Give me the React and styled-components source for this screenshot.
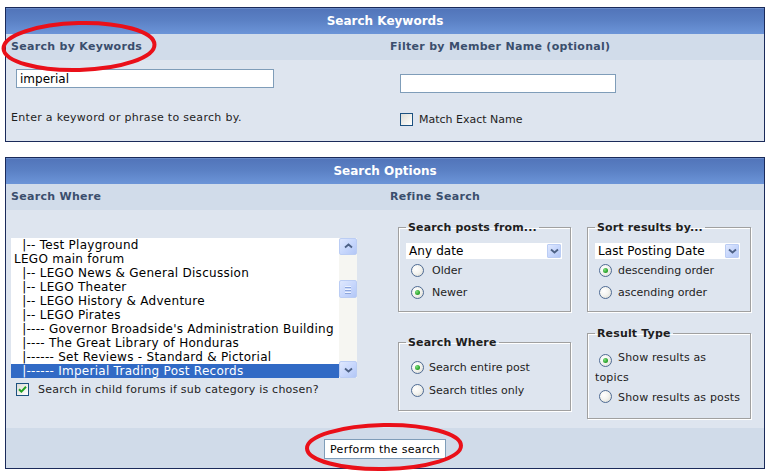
import React from "react";
import styled, { createGlobalStyle } from "styled-components";

const GlobalStyle = createGlobalStyle`
  html, body { margin: 0; padding: 0; background: #ffffff; }
  body { font-family: "DejaVu Sans", Verdana, sans-serif; font-size: 11px; color: #1e1e1e; }
  * { box-sizing: border-box; }
`;

const Page = styled.div`
  position: relative;
  width: 769px;
  height: 476px;
  padding: 7px 4px 0 5px;
  overflow: hidden;
`;

const Panel = styled.section`
  border: 1px solid #1a2a5a;
  background: #dee5ef;
  margin-bottom: ${(p) => p.$gap || 0}px;
`;

const Header = styled.div`
  height: 26px;
  line-height: 26px;
  text-align: center;
  color: #ffffff;
  font-weight: bold;
  font-size: 12px;
  background: linear-gradient(#7f9fd6 0px, #5275ba 1px, #5a80c4 12px, #6c95d8 26px);
`;

const Columns = styled.div`
  display: grid;
  grid-template-columns: 379px 379px;
  height: ${(p) => p.$h}px;
  background: ${(p) => p.$bg || "transparent"};
`;

const SubTitle = styled.div`
  padding-left: 5px;
  line-height: 26px;
  font-weight: bold;
  letter-spacing: 0.3px;
  color: #3a4e6d;
`;

const Cell = styled.div`
  display: flex;
  flex-direction: column;
  padding: ${(p) => p.$pad || "0 0 0 5px"};
`;

const TextInput = styled.input`
  width: ${(p) => p.$w}px;
  height: 19px;
  margin: ${(p) => p.$m || 0};
  border: 1px solid #7f9db9;
  background: #ffffff;
  padding: 0 3px;
  font-family: "DejaVu Sans", Verdana, sans-serif;
  font-size: 12px;
  color: #000;
  outline: none;
`;

const Hint = styled.div`
  margin-top: ${(p) => p.$mt || 0}px;
  line-height: 13px;
  letter-spacing: 0.3px;
  color: #1e1e1e;
`;

const CheckRow = styled.label`
  display: flex;
  align-items: center;
  gap: ${(p) => p.$gap || 6}px;
  margin: ${(p) => p.$m || 0};
  height: 13px;
  letter-spacing: ${(p) => p.$ls || 0}px;
  color: #1e1e1e;
`;

const CheckBox = styled.span`
  width: 13px;
  height: 13px;
  flex: none;
  border: 1px solid #1c5180;
  background: linear-gradient(135deg, #dcdcd7 0%, #f2f2ee 60%, #ffffff 100%);
  display: flex;
  align-items: center;
  justify-content: center;
`;

const Check = ({ checked }) => (
  <CheckBox>
    {checked && (
      <svg width="9" height="9" viewBox="0 0 9 9">
        <path d="M1 4.2 L3.4 6.6 L8 1.8" fill="none" stroke="#21a121" strokeWidth="2" />
      </svg>
    )}
  </CheckBox>
);

/* ---------- list box ---------- */
const ListBox = styled.div`
  display: flex;
  width: 346px;
  height: 140px;
  background: #ffffff;
  margin-bottom: 5px;
`;

const Options = styled.div`
  flex: 1;
  overflow: hidden;
  font-family: "DejaVu Sans", Verdana, sans-serif;
  font-size: 12px;
  letter-spacing: 0.27px;
`;

const Option = styled.div`
  height: 14px;
  line-height: 14px;
  padding-left: 3px;
  white-space: pre;
  color: ${(p) => (p.$sel ? "#ffffff" : "#000000")};
  background: ${(p) => (p.$sel ? "#316ac5" : "transparent")};
`;

const ScrollBar = styled.div`
  width: 18px;
  flex: none;
  display: flex;
  flex-direction: column;
  background: #f6f6f2;
`;

const ScrollBtn = styled.div`
  height: 17px;
  margin-top: ${(p) => p.$mt || 0}px;
  border: 1px solid #bbcdf4;
  border-radius: 2px;
  background: linear-gradient(135deg, #dfe8fe 0%, #c6d6fc 55%, #b3c7f6 100%);
  display: flex;
  align-items: center;
  justify-content: center;
`;

const Thumb = styled(ScrollBtn)`
  height: 19px;
  margin-top: 25px;
  flex-direction: column;
  gap: 2px;
`;

const Grip = styled.span`
  width: 6px;
  height: 1px;
  background: #eef3fe;
  box-shadow: 0 1px 0 #8da6dc;
`;

const Chevron = ({ down }) => (
  <svg width="9" height="6" viewBox="0 0 9 6">
    <path
      d={down ? "M1 1.5 L4.5 4.5 L8 1.5" : "M1 4.5 L4.5 1.5 L8 4.5"}
      fill="none"
      stroke="#4d6185"
      strokeWidth="1.8"
    />
  </svg>
);

/* ---------- fieldsets ---------- */
const OptionsGrid = styled.div`
  display: grid;
  grid-template-columns: 173px 164px;
  grid-template-rows: 93px 110px;
  column-gap: 16px;
  row-gap: 5px;
  align-items: center;
  padding: 10px 0 0 13px;
`;

const Box = styled.fieldset`
  margin: 0;
  padding: 0 ${(p) => p.$pr || 5}px ${(p) => p.$pb || 8}px 7px;
  border: 1px solid #a0a0a0;
  box-shadow: inset 1px 1px 0 #ffffff, 1px 1px 0 #ffffff;
  min-width: 0;
`;

const Legend = styled.legend`
  padding: 0 2px;
  font-weight: bold;
  line-height: 13px;
  letter-spacing: 0.15px;
  color: #1e1e1e;
`;

const Select = styled.div`
  position: relative;
  height: 16px;
  width: ${(p) => p.$w}px;
  margin-top: 9px;
  background: #ffffff;
  font-family: "DejaVu Sans", Verdana, sans-serif;
  font-size: 12px;
  letter-spacing: 0.1px;
  line-height: 16px;
  padding-left: 3px;
  color: #000;
`;

const SelectBtn = styled.span`
  position: absolute;
  right: 1px;
  top: 1px;
  width: 14px;
  height: 14px;
  border: 1px solid #bbcdf4;
  border-radius: 1px;
  background: linear-gradient(135deg, #dfe8fe 0%, #c6d6fc 55%, #b3c7f6 100%);
  display: flex;
  align-items: center;
  justify-content: center;
`;

const RadioRow = styled.div`
  display: flex;
  align-items: center;
  height: ${(p) => p.$h || 22}px;
  margin-top: ${(p) => p.$mt || 0}px;
  padding-left: ${(p) => p.$pl || 5}px;
  gap: ${(p) => p.$gap || 8}px;
  color: #1e1e1e;
`;

const RadioCircle = styled.span`
  display: inline-flex;
  align-items: center;
  justify-content: center;
  width: 13px;
  height: 13px;
  flex: none;
  border-radius: 50%;
  border: 1px solid #4f6b93;
  background: radial-gradient(circle at 35% 35%, #ffffff 0%, #f4f4f0 45%, #d6d6cf 100%);
  vertical-align: -2px;
  margin: ${(p) => p.$m || 0};
`;

const Dot = styled.span`
  width: 5px;
  height: 5px;
  border-radius: 50%;
  background: radial-gradient(circle at 35% 35%, #7fe07f 0%, #2fa52f 60%, #1b861b 100%);
`;

const Radio = ({ checked, m }) => <RadioCircle $m={m}>{checked && <Dot />}</RadioCircle>;

const Flow = styled.div`
  line-height: 20px;
  margin-top: ${(p) => p.$mt || 0}px;
  letter-spacing: 0.15px;
  color: #1e1e1e;
`;

const Footer = styled.div`
  height: 40px;
  background: #d0dbe9;
  display: flex;
  justify-content: center;
  align-items: center;
  padding-top: 2px;
`;

const Button = styled.button`
  width: 122px;
  height: 20px;
  border: 1px solid #7f9db9;
  background: #ffffff;
  font-family: "DejaVu Sans", Verdana, sans-serif;
  font-size: 11px;
  letter-spacing: 0.28px;
  color: #000;
  padding: 0;
`;

const Marks = styled.svg`
  position: absolute;
  left: 0;
  top: 0;
  pointer-events: none;
`;

const forums = [
  "\u00a0\u00a0|-- Test Playground",
  "LEGO main forum",
  "\u00a0\u00a0|-- LEGO News & General Discussion",
  "\u00a0\u00a0|-- LEGO Theater",
  "\u00a0\u00a0|-- LEGO History & Adventure",
  "\u00a0\u00a0|-- LEGO Pirates",
  "\u00a0\u00a0|---- Governor Broadside's Administration Building",
  "\u00a0\u00a0|---- The Great Library of Honduras",
  "\u00a0\u00a0|------ Set Reviews - Standard & Pictorial",
  "\u00a0\u00a0|------ Imperial Trading Post Records",
];

export default function App() {
  return (
    <>
      <GlobalStyle />
      <Page>
        <Panel $gap={15}>
          <Header>Search Keywords</Header>
          <Columns $h={26} $bg="#d1dcea">
            <SubTitle>Search by Keywords</SubTitle>
            <SubTitle>Filter by Member Name (optional)</SubTitle>
          </Columns>
          <Columns $h={81}>
            <Cell $pad="9px 0 0 5px">
              <TextInput $w={258} $m="0 0 0 5px" defaultValue="imperial" />
              <Hint $mt={23}>Enter a keyword or phrase to search by.</Hint>
            </Cell>
            <Cell $pad="14px 0 0 15px">
              <TextInput $w={216} />
              <CheckRow $m="20px 0 0 0">
                <Check />
                Match Exact Name
              </CheckRow>
            </Cell>
          </Columns>
        </Panel>

        <Panel>
          <Header>Search Options</Header>
          <Columns $h={26} $bg="#d1dcea">
            <SubTitle>Search Where</SubTitle>
            <SubTitle>Refine Search</SubTitle>
          </Columns>
          <Columns $h={218}>
            <Cell $pad="28px 0 0 5px">
              <ListBox>
                <Options>
                  {forums.map((f, i) => (
                    <Option key={i} $sel={i === forums.length - 1}>
                      {f}
                    </Option>
                  ))}
                </Options>
                <ScrollBar>
                  <ScrollBtn>
                    <Chevron />
                  </ScrollBtn>
                  <Thumb>
                    <Grip />
                    <Grip />
                    <Grip />
                  </Thumb>
                  <ScrollBtn $mt={63}>
                    <Chevron down />
                  </ScrollBtn>
                </ScrollBar>
              </ListBox>
              <CheckRow $m="0 0 0 5px" $gap={9} $ls={0.23}>
                <Check checked />
                Search in child forums if sub category is chosen?
              </CheckRow>
            </Cell>
            <Cell $pad="0">
              <OptionsGrid>
                <Box $pb={8}>
                  <Legend>Search posts from...</Legend>
                  <Select $w={156}>
                    Any date
                    <SelectBtn>
                      <Chevron down />
                    </SelectBtn>
                  </Select>
                  <RadioRow>
                    <Radio />
                    Older
                  </RadioRow>
                  <RadioRow>
                    <Radio checked />
                    Newer
                  </RadioRow>
                </Box>
                <Box $pb={8}>
                  <Legend>Sort results by...</Legend>
                  <Select $w={145}>
                    Last Posting Date
                    <SelectBtn>
                      <Chevron down />
                    </SelectBtn>
                  </Select>
                  <RadioRow $pl={4} $gap={6}>
                    <Radio checked />
                    descending order
                  </RadioRow>
                  <RadioRow $pl={4} $gap={6}>
                    <Radio />
                    ascending order
                  </RadioRow>
                </Box>
                <Box $pb={8}>
                  <Legend>Search Where</Legend>
                  <RadioRow $h={23} $pl={5} $gap={5} $mt={7}>
                    <Radio checked />
                    Search entire post
                  </RadioRow>
                  <RadioRow $h={23} $pl={5} $gap={5}>
                    <Radio />
                    Search titles only
                  </RadioRow>
                </Box>
                <Box $pb={10} $pr={8}>
                  <Legend>Result Type</Legend>
                  <Flow $mt={8}>
                    <Radio checked m="0 6px 0 4px" />
                    Show results as topics
                  </Flow>
                  <Flow>
                    <Radio m="0 6px 0 4px" />
                    Show results as posts
                  </Flow>
                </Box>
              </OptionsGrid>
            </Cell>
          </Columns>
          <Footer>
            <Button type="button">Perform the search</Button>
          </Footer>
        </Panel>

        <Marks width="769" height="476" viewBox="0 0 769 476">
          <ellipse cx="79" cy="46.5" rx="75.5" ry="23.5" fill="none" stroke="#ea1019" strokeWidth="4" transform="rotate(-1.5 79 46.5)" />
          <ellipse cx="384" cy="447" rx="77" ry="22" fill="none" stroke="#ea1019" strokeWidth="4" transform="rotate(-1 384 447)" />
        </Marks>
      </Page>
    </>
  );
}
